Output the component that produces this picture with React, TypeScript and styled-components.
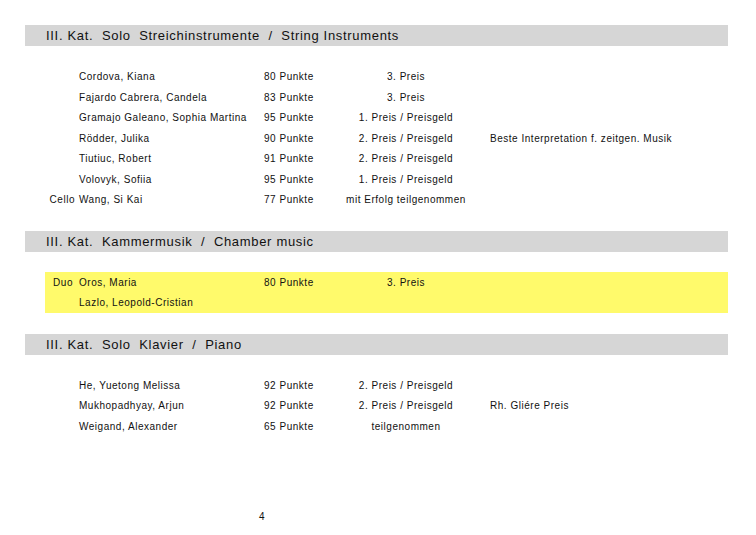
import styled, { createGlobalStyle } from "styled-components";

const GlobalStyle = createGlobalStyle`
  html, body {
    margin: 0;
    padding: 0;
    background: #ffffff;
  }
  body {
    font-family: "Liberation Sans", Arial, sans-serif;
    color: #111111;
  }
`;

const Page = styled.div`
  width: 756px;
  height: 535px;
  padding: 25px 28px 0 25px;
  box-sizing: border-box;
`;

const Section = styled.section`
  margin-bottom: 20.5px;
`;

const SectionTitle = styled.h2`
  margin: 0 0 20.5px;
  height: 21px;
  line-height: 21px;
  padding-left: 21px;
  background: #d6d6d6;
  font-size: 13px;
  font-weight: normal;
  letter-spacing: 0.68px;
  white-space: pre;
`;

const Rows = styled.div<{ $highlight?: boolean }>`
  margin-left: 20px;
  background: ${(p) => (p.$highlight ? "#fffa6b" : "transparent")};
`;

const Row = styled.div`
  display: grid;
  grid-template-columns: 34px 185px 66px 152px 1fr;
  height: 20.5px;
  align-items: center;
  font-size: 10px;
  letter-spacing: 0.52px;
  white-space: nowrap;
`;

const Label = styled.span<{ $wide?: boolean }>`
  text-align: right;
  padding-right: ${(p) => (p.$wide ? "6px" : "4px")};
`;

const Name = styled.span``;

const Points = styled.span``;

const Prize = styled.span`
  text-align: center;
`;

const Remark = styled.span`
  padding-left: 8px;
`;

const PageNumber = styled.div`
  margin-top: 74px;
  padding-left: 234px;
  font-size: 10px;
`;

interface Entry {
  label?: string;
  name: string;
  points?: string;
  prize?: string;
  remark?: string;
}

interface Block {
  title: string;
  highlight?: boolean;
  entries: Entry[];
}

const blocks: Block[] = [
  {
    title: "III. Kat.  Solo  Streichinstrumente  /  String Instruments",
    entries: [
      { name: "Cordova, Kiana", points: "80 Punkte", prize: "3. Preis" },
      { name: "Fajardo Cabrera, Candela", points: "83 Punkte", prize: "3. Preis" },
      { name: "Gramajo Galeano, Sophia Martina", points: "95 Punkte", prize: "1. Preis / Preisgeld" },
      {
        name: "Rödder, Julika",
        points: "90 Punkte",
        prize: "2. Preis / Preisgeld",
        remark: "Beste Interpretation f. zeitgen. Musik",
      },
      { name: "Tiutiuc, Robert", points: "91 Punkte", prize: "2. Preis / Preisgeld" },
      { name: "Volovyk, Sofiia", points: "95 Punkte", prize: "1. Preis / Preisgeld" },
      { label: "Cello", name: "Wang, Si Kai", points: "77 Punkte", prize: "mit Erfolg teilgenommen" },
    ],
  },
  {
    title: "III. Kat.  Kammermusik  /  Chamber music",
    highlight: true,
    entries: [
      { label: "Duo", name: "Oros, Maria", points: "80 Punkte", prize: "3. Preis" },
      { name: "Lazlo, Leopold-Cristian" },
    ],
  },
  {
    title: "III. Kat.  Solo  Klavier  /  Piano",
    entries: [
      { name: "He, Yuetong Melissa", points: "92 Punkte", prize: "2. Preis / Preisgeld" },
      {
        name: "Mukhopadhyay, Arjun",
        points: "92 Punkte",
        prize: "2. Preis / Preisgeld",
        remark: "Rh. Gliére Preis",
      },
      { name: "Weigand, Alexander", points: "65 Punkte", prize: "teilgenommen" },
    ],
  },
];

export default function App() {
  return (
    <>
      <GlobalStyle />
      <Page>
        {blocks.map((block) => (
          <Section key={block.title}>
            <SectionTitle>{block.title}</SectionTitle>
            <Rows $highlight={block.highlight}>
              {block.entries.map((e) => (
                <Row key={e.name}>
                  <Label $wide={block.highlight}>{e.label}</Label>
                  <Name>{e.name}</Name>
                  <Points>{e.points}</Points>
                  <Prize>{e.prize}</Prize>
                  <Remark>{e.remark}</Remark>
                </Row>
              ))}
            </Rows>
          </Section>
        ))}
        <PageNumber>4</PageNumber>
      </Page>
    </>
  );
}
